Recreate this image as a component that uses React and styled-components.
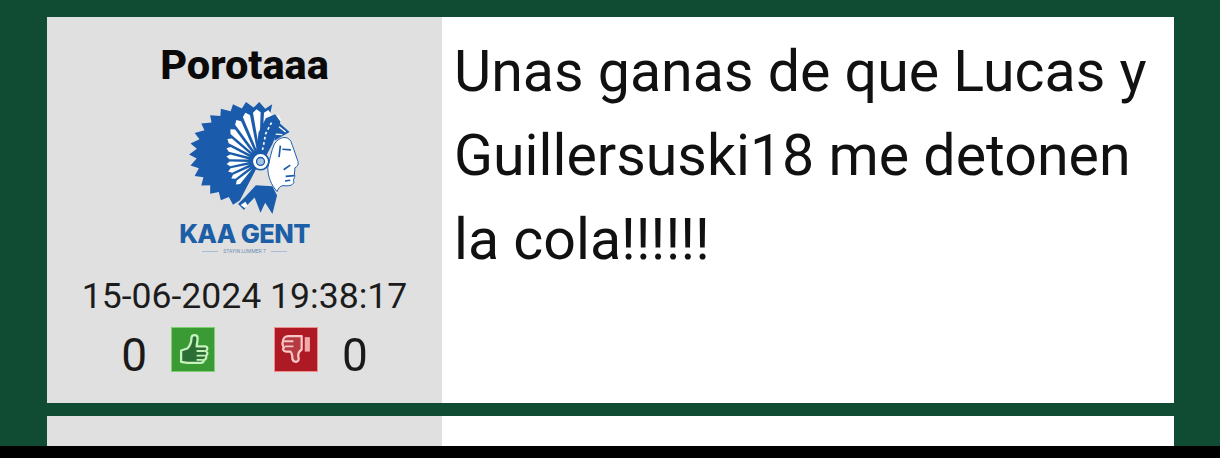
import React from 'react';
import styled, { createGlobalStyle } from 'styled-components';

const GlobalStyle = createGlobalStyle`
    html, body {
        margin: 0;
        padding: 0;
        background: #0f4c33;
    }
    body {
        font-family: Roboto, "Liberation Sans", sans-serif;
    }
`;

const BLUE = '#1a5cab';

// the logo is drawn in a 340 wide box, centred on the ear of the chief
const polar = (cx, cy, rx, ry, deg) => {
    const rad = (deg * Math.PI) / 180;
    return [cx + rx * Math.cos(rad), cy - ry * Math.sin(rad)];
};

const headdressOutline = () => {
    const points = [[335, 212]];
    for (let a = 72; a <= 252; a += 12) {
        points.push(polar(312, 192, 192, 160, a));
        points.push(polar(312, 192, 170, 142, a + 5));
    }
    return points.map((p) => p.join(',')).join(' ');
};

const featherWedges = () => {
    const wedges = [];
    for (let a = 68; a <= 236; a += 13) {
        const s = Math.sin((a * Math.PI) / 180);
        const reach = 92 + 56 * Math.max(0, s) * Math.max(0, s);
        const from = polar(335, 212, 34, 34, a);
        const left = polar(335, 212, reach, reach, a - 4.5);
        const tip = polar(335, 212, reach + 10, reach + 10, a);
        const right = polar(335, 212, reach, reach, a + 4.5);
        wedges.push([from, left, tip, right].map((p) => p.join(',')).join(' '));
    }
    return wedges;
};

const GentLogo = () => (
    <LogoSvg viewBox="120 30 335 345" aria-hidden="true">
        <polygon fill={BLUE} points={headdressOutline()} />
        {featherWedges().map((points) => (
            <polygon key={points} fill="#fff" points={points} />
        ))}
        {/* crown band with beads */}
        <path fill={BLUE} d="M322 190 L330 125 L352 82 L380 70 L396 92 L388 120 L372 160 L352 198 Z" />
        <path fill={BLUE} d="M388 92 L424 124 L396 140 L378 150 Z" />
        <path fill="none" stroke="#fff" strokeWidth="5" strokeDasharray="8 8" d="M342 178 L352 128 L372 90" />
        <path fill="none" stroke="#fff" strokeWidth="4" d="M392 108 L412 124 M382 130 L402 132" />
        {/* hanging feathers */}
        <path fill={BLUE} d="M322 285 L372 288 L386 316 L372 372 L350 338 L336 368 L318 322 L296 345 L286 360 L268 342 L290 320 Z" />
        <path fill="#fff" d="M276 345 L290 335 L298 348 L288 354 Z" />
        {/* face */}
        <path
            fill="#fff"
            stroke={BLUE}
            strokeWidth="3"
            d="M378 160 C390 140 416 132 428 152 C434 170 440 184 446 204 C452 218 452 226 440 232 C441 242 436 248 440 258 C438 264 434 268 437 276 C434 286 420 288 404 286 C394 288 390 294 386 304 C368 284 358 258 358 232 C364 208 368 182 378 160 Z"
        />
        <path fill="none" stroke={BLUE} strokeWidth="5" d="M402 176 L428 178 M396 165 L392 200 M406 238 L426 224 M412 258 L438 256 M410 272 L426 270" />
        <circle cx="336" cy="213" r="25" fill="#fff" stroke={BLUE} strokeWidth="5" />
        <circle cx="336" cy="213" r="12" fill="#a9c4e2" stroke={BLUE} strokeWidth="4" />
    </LogoSvg>
);

const ThumbUp = () => (
    <svg width="33" height="33" viewBox="0 0 32 32" aria-hidden="true">
        <path
            d="M4 17 L10 15 C13 12 14 9 14 5 C14 1 20 1 20 5 C20 8 19 11 19 13 L27 13 C30 13 30 16 28 17.5 C30 19 30 21 28 22 C29 24 28 26 26 26 C26 28 25 29 23 29 L10 29 L4 28 Z"
            fill="#2b6f35"
            stroke="#c6f2bc"
            strokeWidth="2.2"
            strokeLinejoin="round"
        />
        <path d="M19 17.5 L27 17.5 M19 22 L27 22 M19 26 L25 26" stroke="#c6f2bc" strokeWidth="1.8" fill="none" />
    </svg>
);

const ThumbDown = () => (
    <svg width="33" height="33" viewBox="0 0 32 32" aria-hidden="true">
        <path
            d="M3 8 C3 5 5 3 8 3 L21 3 L21 16 C18 18 17 20 18 24 C19 29 13 29 12 25 C12 22 12 20 10 18 L6 18 C3 18 2 15 4 14 C2 12 2 10 3 8 Z"
            fill="#b53a42"
            stroke="#f8c6c6"
            strokeWidth="2.2"
            strokeLinejoin="round"
        />
        <rect x="24" y="4" width="5" height="14" fill="#f0a8a8" />
        <path d="M4 8 L13 8 M5 13 L13 13" stroke="#f8c6c6" strokeWidth="1.8" fill="none" />
    </svg>
);

export default function App() {
    return (
        <>
            <GlobalStyle />
            <Screen>
                <Feed>
                    <Post>
                        <Side>
                            <UserName>Porotaaa</UserName>
                            <Badge>
                                <GentLogo />
                                <ClubName>KAA GENT</ClubName>
                                <Motto>STAYIN LUMMER 7</Motto>
                            </Badge>
                            <PostDate>15-06-2024 19:38:17</PostDate>
                            <Votes>
                                <VoteCount>0</VoteCount>
                                <VoteButton $bg="#3a9a34" $edge="#7fd072"><ThumbUp /></VoteButton>
                                <VoteGap />
                                <VoteButton $bg="#ad1a24" $edge="#ef8f8f"><ThumbDown /></VoteButton>
                                <VoteCount>0</VoteCount>
                            </Votes>
                        </Side>
                        <Message>Unas ganas de que Lucas y Guillersuski18 me detonen la cola!!!!!!</Message>
                    </Post>
                    <NextPost>
                        <NextSide />
                        <NextMessage />
                    </NextPost>
                </Feed>
                <BottomBar />
            </Screen>
        </>
    );
}

const Screen = styled.div`
    width: 1220px;
    height: 458px;
    display: flex;
    flex-direction: column;
    overflow: hidden;
    background: #0f4c33;
`;

const Feed = styled.div`
    flex: 1;
    min-height: 0;
    overflow: hidden;
    display: flex;
    flex-direction: column;
    gap: 13px;
    padding: 17px 46px 0 47px;
    filter: blur(0.5px);
`;

const Post = styled.div`
    height: 386px;
    flex-shrink: 0;
    display: flex;
    background: #fff;
`;

const Side = styled.div`
    width: 395px;
    flex-shrink: 0;
    display: flex;
    flex-direction: column;
    align-items: center;
    background: #e0e0e0;
    color: #111;
`;

const UserName = styled.div`
    margin-top: 26px;
    font-size: 41.5px;
    line-height: 44px;
    font-weight: 800;
    color: #0a0a0a;
`;

const Badge = styled.div`
    margin-top: 14px;
    display: flex;
    flex-direction: column;
    align-items: center;
`;

const LogoSvg = styled.svg`
    width: 111px;
    height: 114px;
    display: block;
`;

const ClubName = styled.div`
    margin-top: 6px;
    font-family: Inter, sans-serif;
    font-size: 25.5px;
    line-height: 26px;
    font-weight: 800;
    letter-spacing: -0.6px;
    color: #1d5fa6;
`;

const Motto = styled.div`
    display: flex;
    align-items: center;
    gap: 5px;
    font-size: 5px;
    line-height: 8px;
    color: #6f8fb4;

    &::before, &::after {
        content: '';
        width: 16px;
        height: 1px;
        background: #a9bcd2;
    }
`;

const PostDate = styled.div`
    margin-top: 21px;
    font-size: 35.6px;
    line-height: 40px;
    font-weight: 400;
    color: #1c1c1c;
`;

const Votes = styled.div`
    margin-top: 11px;
    display: flex;
    align-items: flex-start;
`;

const VoteCount = styled.span`
    margin-top: 3px;
    font-size: 46px;
    line-height: 50px;
    color: #1a1a1a;
`;

const VoteButton = styled.span`
    width: 44px;
    height: 45px;
    margin: 0 24px;
    display: flex;
    align-items: center;
    justify-content: center;
    background: ${(p) => p.$bg};
    box-shadow: inset 0 0 0 1px ${(p) => p.$edge};
`;

const VoteGap = styled.span`
    width: 11px;
`;

const Message = styled.div`
    flex: 1;
    padding: 13px 12px 0 12px;
    font-size: 57.3px;
    line-height: 84px;
    color: #111;
`;

const NextPost = styled.div`
    height: 60px;
    flex-shrink: 0;
    display: flex;
    background: #fff;
`;

const NextSide = styled.div`
    width: 395px;
    background: #e0e0e0;
`;

const NextMessage = styled.div`
    flex: 1;
`;

const BottomBar = styled.div`
    height: 12px;
    flex-shrink: 0;
    background: #000;
`;
